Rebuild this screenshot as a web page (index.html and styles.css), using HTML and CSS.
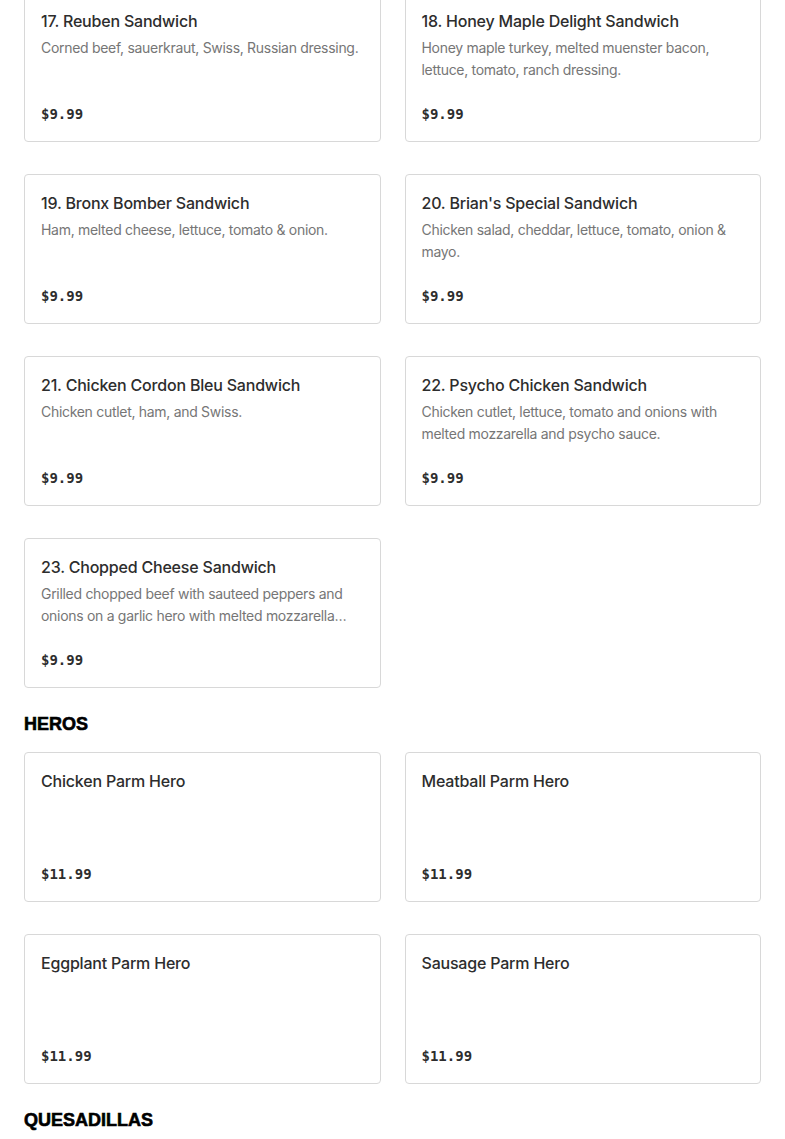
FILE: index.html
```html
<!DOCTYPE html>
<html>
<head>
<meta charset="utf-8">
<link rel="stylesheet" href="styles.css">
</head>
<body>
<main class="menu">
  <div class="grid">
    <div class="card"><h3 class="title">17. Reuben Sandwich</h3><p class="desc">Corned beef, sauerkraut, Swiss, Russian dressing.</p><div class="price">$9.99</div></div>
    <div class="card"><h3 class="title">18. Honey Maple Delight Sandwich</h3><p class="desc">Honey maple turkey, melted muenster bacon, lettuce, tomato, ranch dressing.</p><div class="price">$9.99</div></div>
    <div class="card"><h3 class="title">19. Bronx Bomber Sandwich</h3><p class="desc">Ham, melted cheese, lettuce, tomato &amp; onion.</p><div class="price">$9.99</div></div>
    <div class="card"><h3 class="title">20. Brian's Special Sandwich</h3><p class="desc">Chicken salad, cheddar, lettuce, tomato, onion &amp; mayo.</p><div class="price">$9.99</div></div>
    <div class="card"><h3 class="title">21. Chicken Cordon Bleu Sandwich</h3><p class="desc">Chicken cutlet, ham, and Swiss.</p><div class="price">$9.99</div></div>
    <div class="card"><h3 class="title">22. Psycho Chicken Sandwich</h3><p class="desc">Chicken cutlet, lettuce, tomato and onions with melted mozzarella and psycho sauce.</p><div class="price">$9.99</div></div>
    <div class="card"><h3 class="title">23. Chopped Cheese Sandwich</h3><p class="desc">Grilled chopped beef with sauteed peppers and onions on a garlic hero with melted mozzarella…</p><div class="price">$9.99</div></div>
  </div>
  <h2 class="section">HEROS</h2>
  <div class="grid">
    <div class="card"><h3 class="title">Chicken Parm Hero</h3><div class="price">$11.99</div></div>
    <div class="card"><h3 class="title">Meatball Parm Hero</h3><div class="price">$11.99</div></div>
    <div class="card"><h3 class="title">Eggplant Parm Hero</h3><div class="price">$11.99</div></div>
    <div class="card"><h3 class="title">Sausage Parm Hero</h3><div class="price">$11.99</div></div>
  </div>
  <h2 class="section">QUESADILLAS</h2>
</main>
</body>
</html>
```
FILE: styles.css
```css
html, body {
  margin: 0;
  padding: 0;
  background: #ffffff;
}
.menu {
  margin: -8px 24px 0 24px;
  font-family: Inter, "Noto Sans", sans-serif;
  color: #2d2d2d;
}
.grid {
  display: grid;
  grid-template-columns: 1fr 1fr;
  column-gap: 24px;
  row-gap: 32px;
}
.card {
  box-sizing: border-box;
  height: 150px;
  border: 1px solid #d8d8d8;
  border-radius: 4px;
  padding: 16px;
  display: flex;
  flex-direction: column;
}
.title {
  margin: 0;
  font-size: 16px;
  line-height: 24px;
  font-weight: 500;
  color: #2d2d2d;
  letter-spacing: -0.2px;
}
.desc {
  margin: 4px 0 0 0;
  font-size: 14px;
  line-height: 22px;
  color: #767676;
  letter-spacing: -0.3px;
}
.price {
  margin-top: auto;
  font-family: "DejaVu Sans Mono", monospace;
  font-weight: bold;
  font-size: 14px;
  line-height: 22px;
  color: #2d2d2d;
}
.section {
  margin: 24px 0 16px 0;
  font-family: "Liberation Sans", Arial, sans-serif;
  font-weight: 900;
  font-size: 18px;
  line-height: 24px;
  color: #000000;
  -webkit-text-stroke: 0.6px #000;
}
```
